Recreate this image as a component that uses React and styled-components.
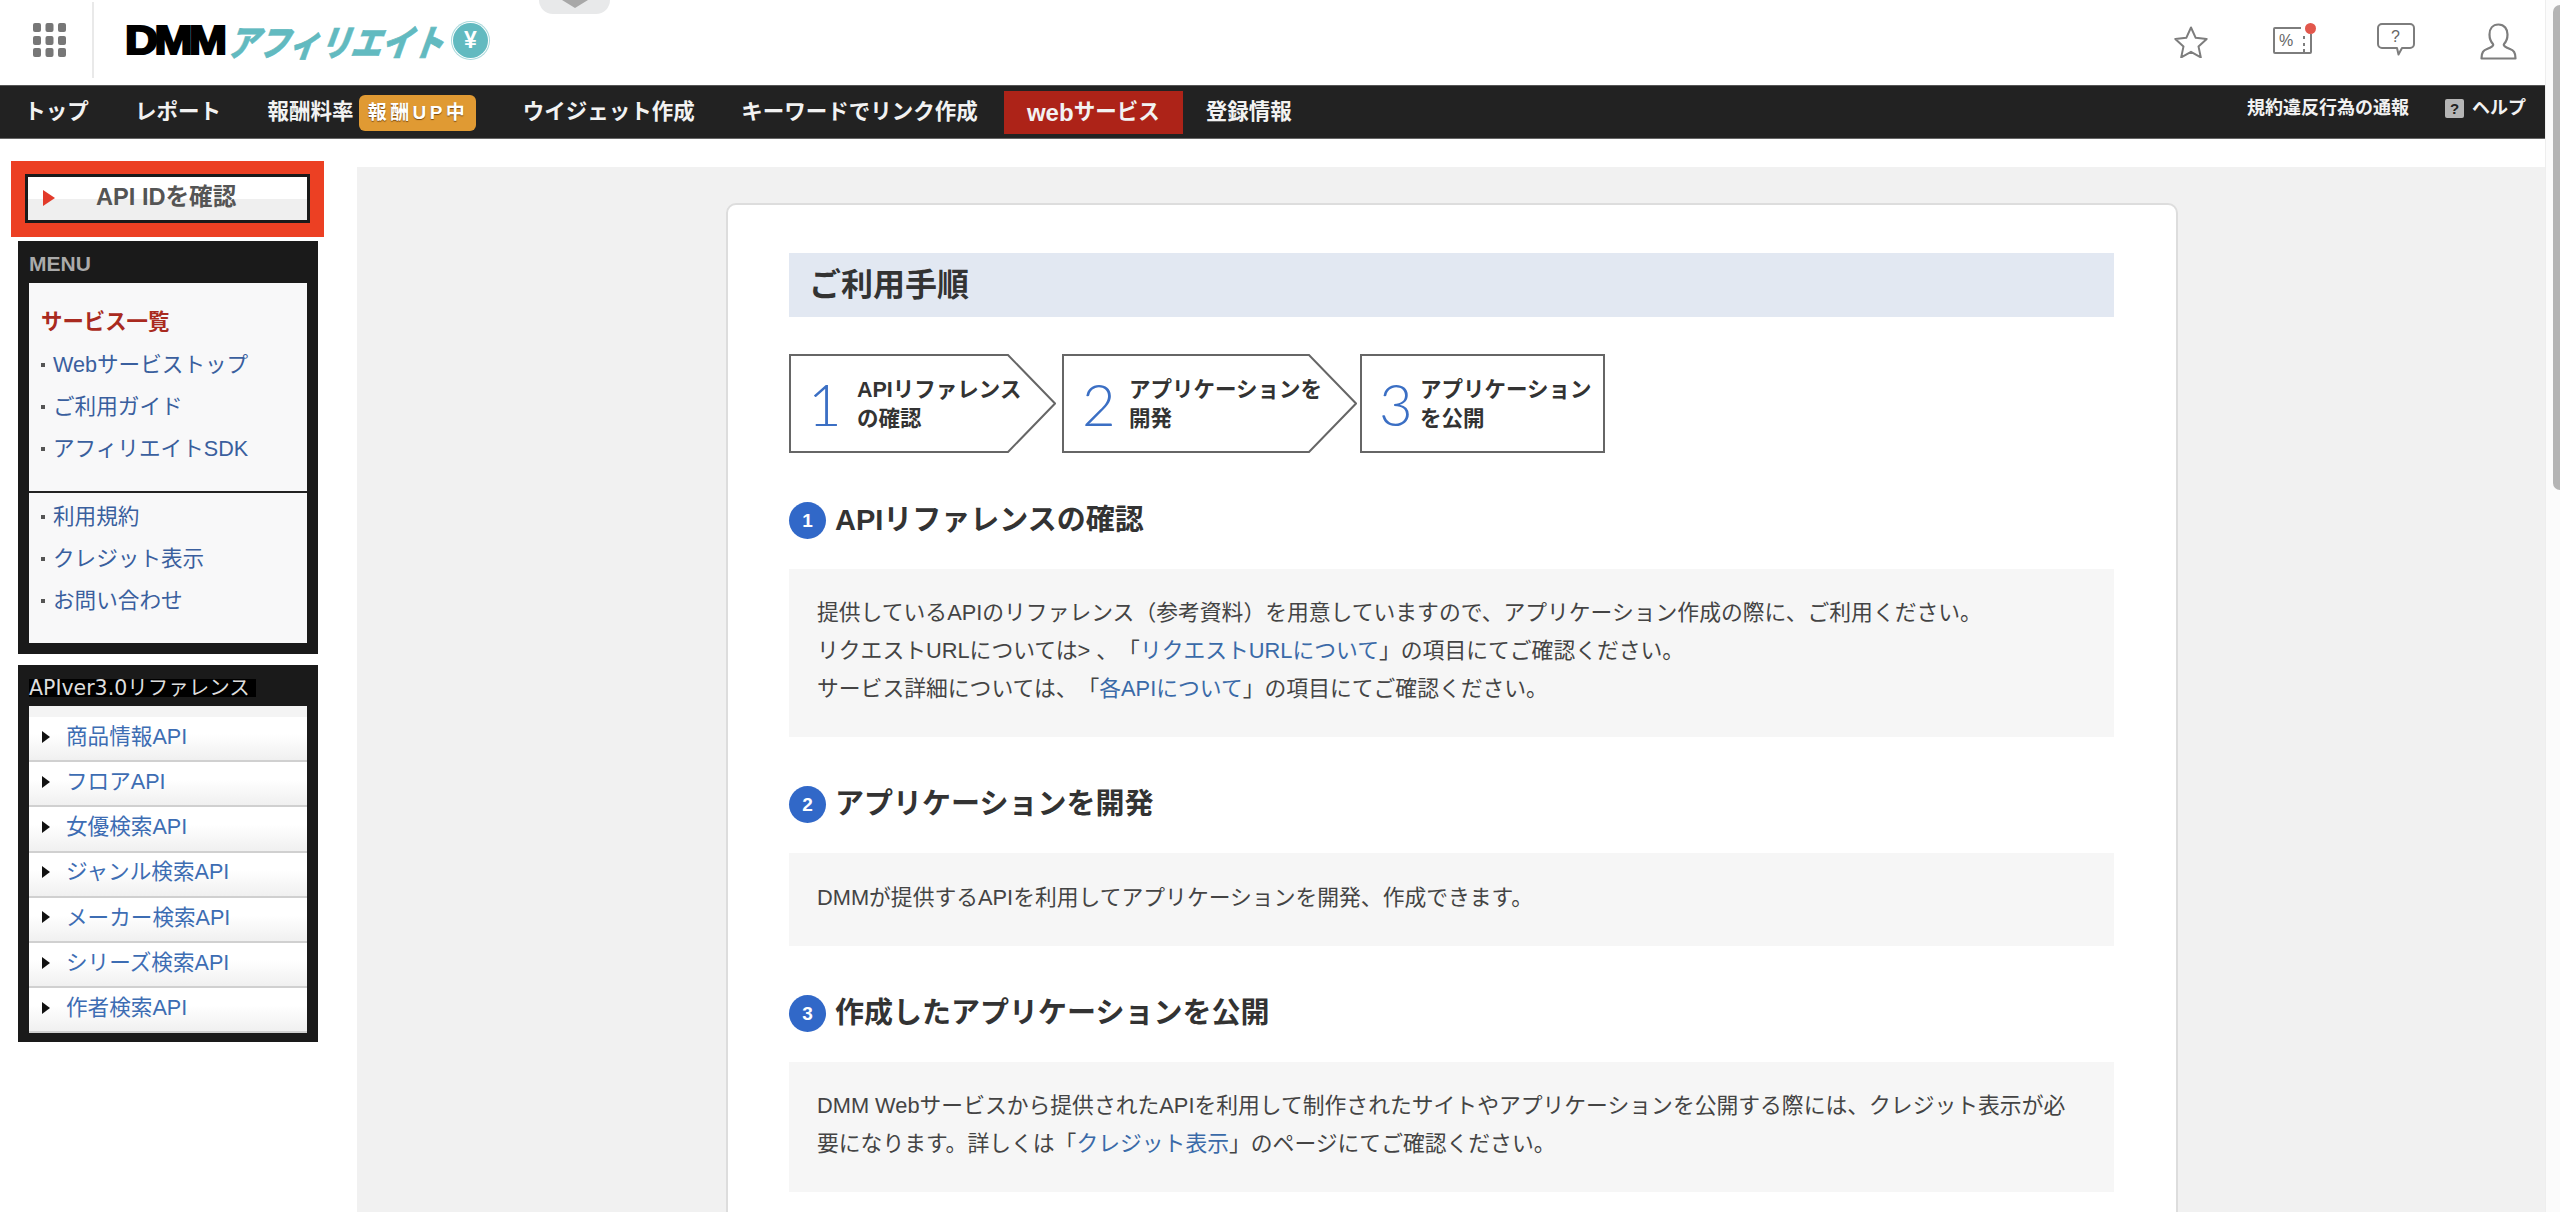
import React from 'react';
import styled, { createGlobalStyle } from 'styled-components';

const GlobalStyle = createGlobalStyle`
  html, body {
    margin: 0;
    padding: 0;
    background: #fff;
  }
  body {
    font-family: "Liberation Sans", "Noto Sans CJK JP", sans-serif;
    color: #444;
    text-spacing-trim: space-all;
  }
  * {
    box-sizing: border-box;
  }
  a {
    text-decoration: none;
    color: inherit;
  }
  ul {
    list-style: none;
    margin: 0;
    padding: 0;
  }
`;

const Page = styled.div`
  display: flex;
  width: 2560px;
  height: 1212px;
  overflow: hidden;
`;

const Main = styled.div`
  width: 2545px;
  display: flex;
  flex-direction: column;
`;

const ScrollTrack = styled.div`
  width: 15px;
  padding: 5px 0 0 7px;
  background: #fbfbfb;
  border-left: 1px solid #eee;
`;

const ScrollThumb = styled.div`
  height: 485px;
  background: #b4b4b4;
  border-radius: 7px 0 0 7px;
`;

/* header */
const Header = styled.header`
  height: 85px;
  display: flex;
  align-items: flex-start;
  padding-right: 28px;
`;

const GridCell = styled.div`
  width: 94px;
  height: 76px;
  margin-top: 2px;
  padding: 21px 0 0 33px;
  border-right: 2px solid #e9e9e9;
`;

const Logo = styled.a`
  display: flex;
  align-items: center;
  height: 34px;
  margin: 23px 0 0 31px;
`;

const LogoDmm = styled.span`
  width: 100px;
  font-size: 40px;
  line-height: 34px;
  font-weight: 700;
  color: #000;
  letter-spacing: -3px;
  -webkit-text-stroke: 2.2px #000;
  transform: scaleX(1.14);
  transform-origin: left center;
`;

const LogoKana = styled.span`
  width: 221px;
  margin-left: 7px;
  font-family: "Noto Sans CJK JP", sans-serif;
  font-size: 36px;
  line-height: 34px;
  font-weight: 900;
  color: #62bac0;
  white-space: nowrap;
  -webkit-text-stroke: 0.6px #62bac0;
  transform: skewX(-20deg) scaleX(0.86);
  transform-origin: left center;
`;

const LogoYen = styled.span`
  width: 35px;
  height: 35px;
  border-radius: 50%;
  display: flex;
  align-items: center;
  justify-content: center;
  background: #62bac0;
  color: #fff;
  font-size: 23px;
  font-weight: 700;
  box-shadow: 0 0 0 1px #fff, 0 0 0 2px #a9d9dc;
`;

const PullTab = styled.div`
  width: 71px;
  height: 14px;
  margin-left: 51px;
  display: flex;
  justify-content: center;
  background: #e8e9ea;
  border-radius: 0 0 14px 14px;
`;

const HeaderIcons = styled.div`
  margin-left: auto;
  display: flex;
  align-items: flex-start;
  gap: 65px;
  padding-top: 23px;
`;

const IconBox = styled.div`
  position: relative;
  line-height: 0;
  margin-top: ${(p) => p.$top || 0}px;
`;

const RedDot = styled.span`
  position: absolute;
  top: -4px;
  right: -4px;
  width: 11px;
  height: 11px;
  border-radius: 50%;
  background: #e2574c;
`;

/* nav */
const Nav = styled.nav`
  height: 54px;
  flex: none;
  display: flex;
  align-items: center;
  padding: 0 19px 0 1px;
  background: #222;
  border-top: 1px solid #555;
  border-bottom: 1px solid #666;
`;

const NavItem = styled.a`
  display: flex;
  align-items: center;
  height: 43px;
  margin-left: ${(p) => (p.$active ? '3px' : '0')};
  padding: 2px ${(p) => (p.$active ? '23px' : '23.2px')} 0;
  font-size: 21.5px;
  line-height: 1;
  font-weight: 700;
  color: #f2f2f2;
  white-space: nowrap;
  background: ${(p) => (p.$active ? '#ad2318' : 'transparent')};
`;

const WebWord = styled.span`
  font-size: 24px;
`;

const Badge = styled.span`
  display: inline-block;
  width: 117px;
  height: 36px;
  margin-left: 6px;
  border-radius: 6px;
  background: #e09a33;
  color: #fff;
  font-size: 19px;
  line-height: 36px;
  text-align: center;
  letter-spacing: 3.4px;
  text-shadow: 0 1px 1px #7a4a10;
`;

const NavRight = styled.div`
  margin-left: auto;
  display: flex;
  align-items: center;
  gap: 36px;
  padding-bottom: 8px;
  font-size: 18px;
  line-height: 1;
  font-weight: 700;
  color: #f2f2f2;
`;

const Help = styled.a`
  display: flex;
  align-items: center;
  gap: 8px;
`;

const HelpMark = styled.span`
  width: 19px;
  height: 19px;
  border-radius: 2px;
  background: #b5b5b5;
  color: #222;
  font-size: 15px;
  line-height: 19px;
  text-align: center;
`;

/* body */
const Body = styled.div`
  flex: 1;
  display: flex;
  min-height: 0;
`;

const Sidebar = styled.aside`
  width: 357px;
  flex: none;
  padding: 22px 0 0 11px;
`;

const ApiIdFrame = styled.div`
  width: 313px;
  height: 76px;
  padding: 13px 14px 14px;
  background: #ec4023;
`;

const ApiIdButton = styled.a`
  display: flex;
  align-items: center;
  height: 49px;
  padding: 0 0 1px 15px;
  border: 3px solid #1a1a1a;
  background: linear-gradient(#fff 50%, #efefef 50%);
  color: #555;
  font-size: 23.6px;
  line-height: 1;
  font-weight: 700;
  &::before {
    content: '';
    width: 0;
    height: 0;
    margin-right: 41px;
    border-style: solid;
    border-width: 8px 0 8px 12px;
    border-color: transparent transparent transparent #e23a2a;
  }
`;

const Panel = styled.section`
  width: 300px;
  margin: ${(p) => p.$gap}px 0 0 7px;
  padding: 0 11px ${(p) => p.$bottom}px;
  background: #1a1a1a;
`;

const MenuHead = styled.h3`
  margin: 0;
  height: 42px;
  padding-top: 11px;
  font-family: "Liberation Sans", sans-serif;
  font-size: 21px;
  line-height: 24px;
  font-weight: 700;
  color: #aaa;
`;

const ApiHead = styled.h3`
  margin: 0;
  height: 41px;
  padding-top: 14px;
  font-size: 20.5px;
  line-height: 18px;
  font-weight: 400;
  font-family: "DejaVu Sans", "Noto Sans CJK JP", sans-serif;
  color: #ddd;
  span {
    display: inline-block;
    padding-right: 6px;
    background: #000;
    white-space: nowrap;
  }
`;

const MenuBody = styled.div`
  background: #f8f8f9;
`;

const MenuGroup = styled.ul`
  padding: ${(p) => p.$pad};
  & + & {
    border-top: 2px solid #222;
  }
`;

const MenuLink = styled.li`
  height: 42px;
  padding-left: 12px;
  display: flex;
  align-items: center;
  font-size: 21.6px;
  line-height: 1;
  color: #3a5f9e;
  &::before {
    content: '';
    width: 4px;
    height: 4px;
    margin-right: 8px;
    background: #555;
  }
`;

const MenuCurrent = styled.li`
  height: 42px;
  padding-left: 12px;
  display: flex;
  align-items: center;
  font-size: 21.4px;
  line-height: 1;
  font-weight: 700;
  color: #a92a20;
`;

const ApiList = styled.ul`
  padding-top: 11px;
  background: #f4f4f4;
`;

const ApiItem = styled.li`
  height: 45.2px;
  padding: 0 0 4px 13px;
  display: flex;
  align-items: center;
  font-size: 21.6px;
  line-height: 1;
  color: #3d6db3;
  background: linear-gradient(#fff 40%, #f0f0f0);
  border-bottom: 2px solid #d0d0d0;
  &::before {
    content: '';
    width: 0;
    height: 0;
    margin-right: 16px;
    border-style: solid;
    border-width: 6px 0 6px 8px;
    border-color: transparent transparent transparent #111;
  }
`;

/* content */
const Content = styled.main`
  flex: 1;
  margin-top: 28px;
  padding: 36px 367px 0 369px;
  background: #f1f1f1;
  overflow: hidden;
`;

const Card = styled.article`
  min-height: 1200px;
  padding: 48px 62px 0 61px;
  background: #fff;
  border: 2px solid #ddd;
  border-radius: 10px 10px 0 0;
`;

const TitleBar = styled.h2`
  margin: 0;
  height: 64px;
  padding-left: 20px;
  display: flex;
  align-items: center;
  background: #e2e8f2;
  font-size: 32px;
  line-height: 1;
  font-weight: 700;
  color: #333;
`;

const Steps = styled.div`
  display: flex;
  margin-top: 37px;
`;

const Step = styled.div`
  position: relative;
  width: ${(p) => p.$w}px;
  height: 99px;
  margin-right: ${(p) => p.$gap}px;
  padding-left: ${(p) => p.$pad}px;
  display: flex;
  align-items: center;
  svg {
    position: absolute;
    top: 0;
    left: 0;
  }
`;

const StepNum = styled.span`
  position: relative;
  width: ${(p) => p.$w}px;
  flex: none;
  font-family: Lato, sans-serif;
  font-weight: 300;
  font-size: 58px;
  line-height: 58px;
  color: #3b6fc4;
`;

const StepText = styled.span`
  position: relative;
  padding-top: 3px;
  font-size: 21.5px;
  line-height: 29px;
  font-weight: 700;
  color: #333;
`;

const Heading = styled.h3`
  margin: 48px 0 ${(p) => p.$bottom}px;
  height: 38px;
  display: flex;
  align-items: center;
  gap: 9px;
  font-size: 29px;
  line-height: 1;
  font-weight: 700;
  color: #333;
`;

const HeadNum = styled.span`
  width: 37px;
  height: 37px;
  flex: none;
  border-radius: 50%;
  display: flex;
  align-items: center;
  justify-content: center;
  background: #3168c8;
  color: #fff;
  font-size: 19px;
  font-weight: 700;
`;

const Note = styled.div`
  padding: ${(p) => p.$top || 25}px 28px 29px;
  background: #f6f6f6;
  font-size: 21.8px;
  line-height: 38px;
  color: #444;
  a {
    color: #3a6aa8;
  }
`;

const StepShape = ({ w, tip }) => (
  <svg width={w} height="99" viewBox={`0 0 ${w} 99`} fill="#fff" stroke="#666" strokeWidth="2">
    {tip ? (
      <path d={`M1 1H${w - 48}L${w - 1} 49.5L${w - 48} 98H1Z`} />
    ) : (
      <path d={`M1 1H${w - 1}V98H1Z`} />
    )}
  </svg>
);

const GridIcon = () => (
  <svg width="33" height="36" viewBox="0 0 33 36" fill="#777">
    {[0, 13, 25].map((y) =>
      [0, 12.5, 25].map((x) => <rect key={`${x}-${y}`} x={x} y={y} width="8" height="9" rx="2" />)
    )}
  </svg>
);

const StarIcon = () => (
  <svg width="34" height="32" viewBox="0 0 34 32" fill="none" stroke="#7d7d7d" strokeWidth="2" strokeLinejoin="round">
    <path d="M17 1.5l4.7 10.3 11 1.2-8.2 7.4 2.3 11L17 25.8 7.2 31.4l2.3-11L1.3 13l11-1.2z" />
  </svg>
);

const CouponIcon = () => (
  <svg width="39" height="27" viewBox="0 0 39 27" fill="none" stroke="#7d7d7d" strokeWidth="2" strokeLinejoin="round">
    <path d="M28 1H2a1 1 0 0 0-1 1v23a1 1 0 0 0 1 1h35a1 1 0 0 0 1-1V7" />
    <path d="M31 9v3M31 16v3M31 22v3" />
    <text x="6" y="19" fontSize="16" fill="#666" stroke="none" fontFamily="Liberation Sans">%</text>
  </svg>
);

const ChatIcon = () => (
  <svg width="38" height="33" viewBox="0 0 38 33" fill="none" stroke="#7d7d7d" strokeWidth="2" strokeLinejoin="round">
    <path d="M5 1h28a4 4 0 0 1 4 4v16a4 4 0 0 1-4 4h-8l-3.5 6.5L20 25H5a4 4 0 0 1-4-4V5a4 4 0 0 1 4-4z" />
    <text x="14" y="19" fontSize="16" fill="#666" stroke="none" fontFamily="Liberation Sans">?</text>
  </svg>
);

const UserIcon = () => (
  <svg width="37" height="37" viewBox="0 0 37 37" fill="none" stroke="#7d7d7d" strokeWidth="2.2" strokeLinejoin="round">
    <path d="M18.5 1.5c-6 0-9 4.5-9 10 0 4 1.5 7.5 3.5 9.5 1 2-2 3.5-6 5-3.5 1.300-5.500 3-5.500 9.500h34c0-6.500-2-8.200-5.500-9.500-4-1.500-7-3-6-5 2-2 3.500-5.500 3.500-9.500 0-5.500-3-10-9-10z" />
  </svg>
);

const menuTop = ['Webサービストップ', 'ご利用ガイド', 'アフィリエイトSDK'];
const menuBottom = ['利用規約', 'クレジット表示', 'お問い合わせ'];
const apiItems = ['商品情報API', 'フロアAPI', '女優検索API', 'ジャンル検索API', 'メーカー検索API', 'シリーズ検索API', '作者検索API'];

const App = () => {
  return (
    <Page>
      <GlobalStyle />
      <Main>
        <Header>
          <GridCell>
            <GridIcon />
          </GridCell>
          <Logo>
            <LogoDmm>DMM</LogoDmm>
            <LogoKana>アフィリエイト</LogoKana>
            <LogoYen>¥</LogoYen>
          </Logo>
          <PullTab>
            <svg width="26" height="8" viewBox="0 0 26 8" fill="#a8a8a8">
              <path d="M0 0h26L13 8z" />
            </svg>
          </PullTab>
          <HeaderIcons>
            <IconBox $top={3}><StarIcon /></IconBox>
            <IconBox $top={4}>
              <CouponIcon />
              <RedDot />
            </IconBox>
            <IconBox><ChatIcon /></IconBox>
            <IconBox><UserIcon /></IconBox>
          </HeaderIcons>
        </Header>

        <Nav>
          <NavItem>トップ</NavItem>
          <NavItem>レポート</NavItem>
          <NavItem>報酬料率<Badge>報酬UP中</Badge></NavItem>
          <NavItem>ウイジェット作成</NavItem>
          <NavItem>キーワードでリンク作成</NavItem>
          <NavItem $active><WebWord>web</WebWord>サービス</NavItem>
          <NavItem>登録情報</NavItem>
          <NavRight>
            <a>規約違反行為の通報</a>
            <Help>
              <HelpMark>?</HelpMark>
              ヘルプ
            </Help>
          </NavRight>
        </Nav>

        <Body>
          <Sidebar>
            <ApiIdFrame>
              <ApiIdButton>API IDを確認</ApiIdButton>
            </ApiIdFrame>
            <Panel $gap={4} $bottom={11}>
              <MenuHead>MENU</MenuHead>
              <MenuBody>
                <MenuGroup $pad="19px 0 21px">
                  <MenuCurrent>サービス一覧</MenuCurrent>
                  {menuTop.map((t) => <MenuLink key={t}>{t}</MenuLink>)}
                </MenuGroup>
                <MenuGroup $pad="3px 0 21px">
                  {menuBottom.map((t) => <MenuLink key={t}>{t}</MenuLink>)}
                </MenuGroup>
              </MenuBody>
            </Panel>
            <Panel $gap={11} $bottom={9}>
              <ApiHead><span>APIver3.0リファレンス</span></ApiHead>
              <ApiList>
                {apiItems.map((t) => <ApiItem key={t}>{t}</ApiItem>)}
              </ApiList>
            </Panel>
          </Sidebar>

          <Content>
            <Card>
              <TitleBar>ご利用手順</TitleBar>
              <Steps>
                <Step $w={267} $gap={6} $pad={19}>
                  <StepShape w={267} tip />
                  <StepNum $w={49}>1</StepNum>
                  <StepText>APIリファレンス<br />の確認</StepText>
                </Step>
                <Step $w={295} $gap={3} $pad={20}>
                  <StepShape w={295} tip />
                  <StepNum $w={47}>2</StepNum>
                  <StepText>アプリケーションを<br />開発</StepText>
                </Step>
                <Step $w={245} $gap={0} $pad={19}>
                  <StepShape w={245} />
                  <StepNum $w={41}>3</StepNum>
                  <StepText>アプリケーション<br />を公開</StepText>
                </Step>
              </Steps>

              <Heading $bottom={30}>
                <HeadNum>1</HeadNum>APIリファレンスの確認
              </Heading>
              <Note>
                提供しているAPIのリファレンス（参考資料）を用意していますので、アプリケーション作成の際に、ご利用ください。<br />
                リクエストURLについては&gt; 、「<a>リクエストURLについて</a>」の項目にてご確認ください。<br />
                サービス詳細については、「<a>各APIについて</a>」の項目にてご確認ください。
              </Note>

              <Heading $bottom={30}>
                <HeadNum>2</HeadNum>アプリケーションを開発
              </Heading>
              <Note $top={26}>DMMが提供するAPIを利用してアプリケーションを開発、作成できます。</Note>

              <Heading $bottom={30}>
                <HeadNum>3</HeadNum>作成したアプリケーションを公開
              </Heading>
              <Note>
                DMM Webサービスから提供されたAPIを利用して制作されたサイトやアプリケーションを公開する際には、クレジット表示が必要になります。詳しくは「<a>クレジット表示</a>」のページにてご確認ください。
              </Note>
            </Card>
          </Content>
        </Body>
      </Main>
      <ScrollTrack>
        <ScrollThumb />
      </ScrollTrack>
    </Page>
  );
};

export default App;
